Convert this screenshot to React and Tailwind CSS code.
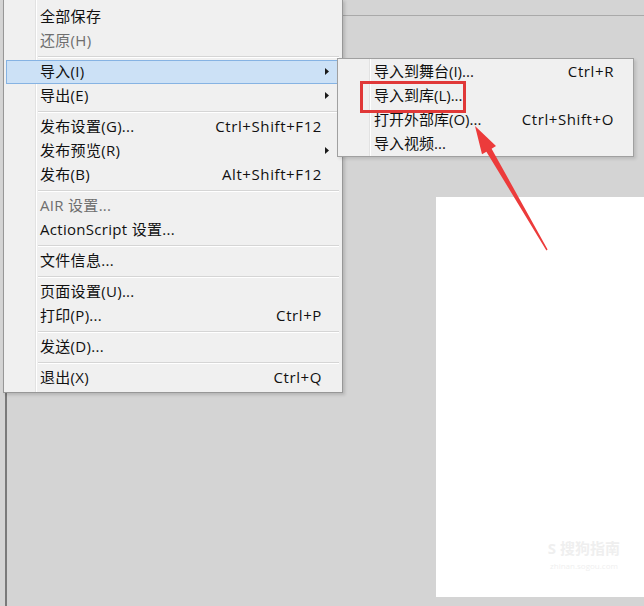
import React from "react";

const FONT = { fontFamily: '"Open Sans", "Noto Sans CJK SC", sans-serif' };

function Arrow() {
  return (
    <svg width="7" height="9" viewBox="0 0 7 9" className="block">
      <path d="M2 1 L6 4.5 L2 8 Z" fill="#1a1a1a" />
    </svg>
  );
}

function Item({ label, shortcut, sub, disabled, active }) {
  return (
    <div
      className={
        "mx-[2px] h-[24px] flex items-center justify-between border pl-[33px] pb-[2px] " +
        (sub ? "pr-[9px] " : "pr-[17px] ") +
        (active ? "bg-[#cce1f6] border-[#86b3e3]" : "border-transparent")
      }
    >
      <span className={"tracking-[0.3px] " + (disabled ? "text-[#6e6e6e]" : "text-[#111]")}>{label}</span>
      {sub ? <Arrow /> : shortcut ? <span className="text-[#111] tracking-[0.6px]">{shortcut}</span> : null}
    </div>
  );
}

function Sep() {
  return (
    <div className="h-[7px] flex flex-col justify-center ml-[34px] mr-[3px]">
      <div className="h-px bg-[#d5d5d5]" />
      <div className="h-px bg-white" />
    </div>
  );
}

function SubItem({ label, shortcut }) {
  return (
    <div className="h-[24px] flex items-center justify-between pl-[36px] pr-[19px] pb-[2px]">
      <span className="text-[#111]">{label}</span>
      {shortcut ? <span className="text-[#111] tracking-[0.6px]">{shortcut}</span> : null}
    </div>
  );
}

export default function App() {
  return (
    <div
      className="relative w-[644px] h-[606px] bg-[#d4d4d4] overflow-hidden text-[15px] leading-[20px]"
      style={FONT}
    >
      {/* background canvas */}
      <div className="flex h-full">
        <div className="w-[8px] h-full pl-[5px]">
          <div className="w-[2px] h-full bg-[#7a7a7a]" />
        </div>
        <div className="flex-1 flex flex-col">
          <div className="ml-[335px] mt-[15px] h-px bg-[#a9a9a9]" />
          <div className="self-end mt-[181px] w-[208px] h-[400px] bg-white flex flex-col justify-end items-end pr-[24px] pb-[26px]">
            <div className="flex flex-col items-center gap-[4px] text-[#efefef]">
              <span className="text-[15px] leading-[18px] font-bold">S 搜狗指南</span>
              <span className="text-[8px] leading-[10px]">zhinan.sogou.com</span>
            </div>
          </div>
        </div>
      </div>

      {/* main menu */}
      <div className="absolute left-[3px] top-[-1px] w-[340px] bg-[#f0f0f0] border border-[#979797] pt-[5px] pb-[2px] shadow-[2px_2px_3px_rgba(0,0,0,0.15)]">
        <div className="absolute left-[31px] top-0 bottom-0 w-px bg-[#e2e2e2]" />
        <div className="absolute left-[32px] top-0 bottom-0 w-px bg-white" />
        <div className="relative">
          <Item label="全部保存" />
          <Item label="还原(H)" disabled />
          <Sep />
          <Item label="导入(I)" sub active />
          <Item label="导出(E)" sub />
          <Sep />
          <Item label="发布设置(G)..." shortcut="Ctrl+Shift+F12" />
          <Item label="发布预览(R)" sub />
          <Item label="发布(B)" shortcut="Alt+Shift+F12" />
          <Sep />
          <Item label="AIR 设置..." disabled />
          <Item label="ActionScript 设置..." />
          <Sep />
          <Item label="文件信息..." />
          <Sep />
          <Item label="页面设置(U)..." />
          <Item label="打印(P)..." shortcut="Ctrl+P" />
          <Sep />
          <Item label="发送(D)..." />
          <Sep />
          <Item label="退出(X)" shortcut="Ctrl+Q" />
        </div>
      </div>

      {/* submenu */}
      <div className="absolute left-[337px] top-[58px] w-[297px] h-[99px] bg-[#f0f0f0] border border-[#a0a0a0] pt-[1px] shadow-[2px_2px_3px_rgba(0,0,0,0.12)]">
        <div className="absolute left-[31px] top-0 bottom-0 w-px bg-[#e2e2e2]" />
        <div className="absolute left-[32px] top-0 bottom-0 w-px bg-white" />
        <div className="relative">
          <SubItem label="导入到舞台(I)..." shortcut="Ctrl+R" />
          <SubItem label="导入到库(L)..." />
          <SubItem label="打开外部库(O)..." shortcut="Ctrl+Shift+O" />
          <SubItem label="导入视频..." />
        </div>
      </div>

      {/* red highlight box */}
      <div className="absolute left-[360px] top-[81px] w-[106px] h-[32px] border-[3px] border-[#e03838]" />

      {/* red arrow */}
      <svg className="absolute left-0 top-0" width="644" height="606" viewBox="0 0 644 606">
        <polygon
          points="475,126 496,146 491.6,148.7 547.6,249.6 546.4,250.4 486.4,151.7 482,154.2"
          fill="#ec3b3b"
        />
      </svg>
    </div>
  );
}
